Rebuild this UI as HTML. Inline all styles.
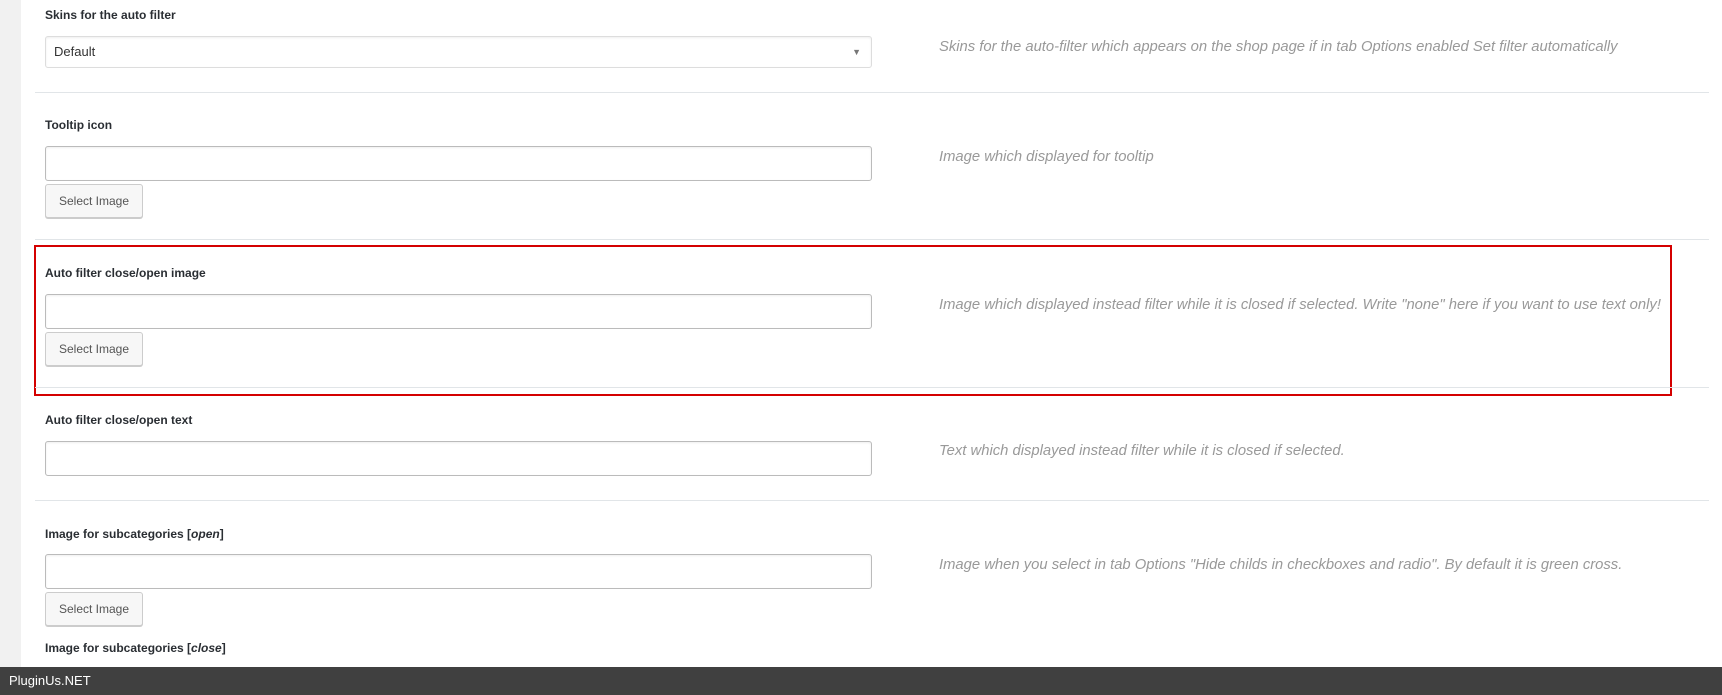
<!DOCTYPE html>
<html><head><meta charset="utf-8"><style>
*{box-sizing:border-box;margin:0;padding:0}
body{width:1722px;height:695px;position:relative;background:#fff;font-family:"Liberation Sans",sans-serif;overflow:hidden}
.bar{position:absolute;left:0;top:0;width:21px;height:667px;background:#f1f1f1}
.lbl{position:absolute;left:45px;font-size:12px;font-weight:bold;color:#2a2e33;line-height:14px}
.inp{position:absolute;left:45px;width:827px;height:35px;border:1px solid #bbb;border-radius:3px;background:#fff;box-shadow:inset 0 1px 2px rgba(0,0,0,.07)}
.btn{position:absolute;left:45px;width:98px;height:34px;border:1px solid #ccc;border-radius:3px;background:#f7f7f7;font-size:12px;color:#555;text-align:center;line-height:32px;box-shadow:0 1px 0 #ccc}
.sep{position:absolute;left:35px;right:13px;height:1px;background:#e1e5e8}
.desc{position:absolute;left:939px;font-size:14.8px;font-style:italic;color:#999;line-height:16px;white-space:nowrap}
.red{position:absolute;left:34px;top:245px;width:1638px;height:151px;border:2px solid #d40000}
.foot{position:absolute;left:0;top:667px;width:1722px;height:28px;background:#404040;color:#fff;font-size:13px;line-height:28px;padding-left:9px}
</style></head><body>
<div class="bar"></div>
<div class="lbl" style="top:8px">Skins for the auto filter</div>
<div class="inp" style="top:36px;height:32px;border-color:#ddd;font-size:13px;color:#333;line-height:30px;padding-left:8px">Default<span style="position:absolute;right:10px;top:0;font-size:9px;color:#777">&#9660;</span></div>
<div class="desc" style="top:39px">Skins for the auto-filter which appears on the shop page if in tab Options enabled Set filter automatically</div>
<div class="sep" style="top:92px"></div>
<div class="lbl" style="top:118px">Tooltip icon</div>
<div class="inp" style="top:146px"></div>
<div class="btn" style="top:184px">Select Image</div>
<div class="desc" style="top:149px">Image which displayed for tooltip</div>
<div class="sep" style="top:239px"></div>
<div class="red"></div>
<div class="lbl" style="top:266px">Auto filter close/open image</div>
<div class="inp" style="top:294px"></div>
<div class="btn" style="top:332px">Select Image</div>
<div class="desc" style="top:297px">Image which displayed instead filter while it is closed if selected. Write "none" here if you want to use text only!</div>
<div class="sep" style="top:387px"></div>
<div class="lbl" style="top:413px">Auto filter close/open text</div>
<div class="inp" style="top:441px"></div>
<div class="desc" style="top:443px">Text which displayed instead filter while it is closed if selected.</div>
<div class="sep" style="top:500px"></div>
<div class="lbl" style="top:527px">Image for subcategories [<i>open</i>]</div>
<div class="inp" style="top:554px"></div>
<div class="btn" style="top:592px">Select Image</div>
<div class="desc" style="top:557px">Image when you select in tab Options "Hide childs in checkboxes and radio". By default it is green cross.</div>
<div class="lbl" style="top:641px">Image for subcategories [<i>close</i>]</div>
<div class="foot">PluginUs.NET</div>
</body></html>
